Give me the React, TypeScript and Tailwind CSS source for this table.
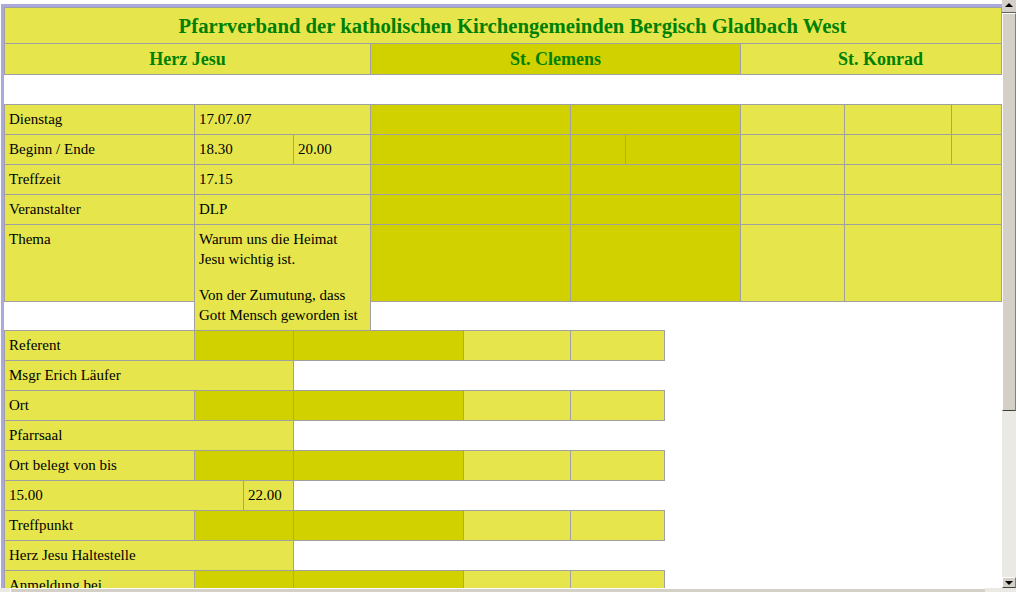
import type { ReactNode } from 'react';

type Tone = 'light' | 'dark';

function Cell({
  className = '',
  tone = 'light',
  children,
}: {
  className?: string;
  tone?: Tone;
  children?: ReactNode;
}) {
  const bg = tone === 'dark' ? 'bg-[#d1d100]' : 'bg-[#e6e64c]';
  return (
    <div
      className={`box-border shrink-0 border border-[#a0a0a0] pl-1 pt-1 leading-5 ${bg} ${className}`}
    >
      {children}
    </div>
  );
}

// one row of the lower block: label + 2 dark + 2 light cells
function FiveRow({ label }: { label: string }) {
  return (
    <div className="-mt-px flex [&>*+*]:-ml-px">
      <Cell className="h-[31px] w-[191px]">{label}</Cell>
      <Cell tone="dark" className="h-[31px] w-[100px]" />
      <Cell tone="dark" className="h-[31px] w-[171px]" />
      <Cell className="h-[31px] w-[108px]" />
      <Cell className="h-[31px] w-[95px]" />
    </div>
  );
}

function WideRow({ text }: { text: string }) {
  return (
    <div className="-mt-px flex">
      <Cell className="h-[31px] w-[290px]">{text}</Cell>
    </div>
  );
}

function Arrow({ up }: { up?: boolean }) {
  return up ? (
    <div className="h-0 w-0 border-x-[4px] border-b-[4px] border-x-transparent border-b-black" />
  ) : (
    <div className="h-0 w-0 border-x-[4px] border-t-[4px] border-x-transparent border-t-black" />
  );
}

function VScrollbar() {
  return (
    <div className="flex w-[14px] flex-col bg-[#ebe9e4]">
      <div className="flex h-[13px] items-start justify-center border-b border-[#606060] bg-[#d4d0c8] pt-[3px]">
        <Arrow up />
      </div>
      <div className="h-[398px] border-b border-l border-r border-t border-b-[#404040] border-l-white border-r-[#808080] border-t-white bg-[#d4d0c8]" />
      <div className="flex-1" />
      <div className="flex h-[11px] items-center justify-center border border-b-[#404040] border-l-white border-r-[#808080] border-t-white bg-[#d4d0c8]">
        <Arrow />
      </div>
    </div>
  );
}

export default function App() {
  return (
    <div className="flex h-[592px] w-[1016px] flex-col overflow-hidden bg-white font-['Liberation_Serif','Times_New_Roman',serif] text-[15px] text-black">
      <div className="flex min-h-0 flex-1">
        <div className="w-[1002px] overflow-hidden pl-px pt-1">
          <div className="h-full border-l-[3px] border-t-[3px] border-[#a9a9dc]">
            {/* title + parish headers (table runs on under the scrollbar) */}
            <div className="flex">
              <Cell className="flex h-[37px] w-[998px] items-center justify-center !p-0 !pl-[19px] text-[20.7px] font-bold text-[#008000]">
                Pfarrverband der katholischen Kirchengemeinden Bergisch Gladbach West
              </Cell>
            </div>
            <div className="-mt-px flex text-[18px] font-bold text-[#008000] [&>*+*]:-ml-px">
              <Cell className="flex h-[32px] w-[367px] items-center justify-center !p-0">Herz Jesu</Cell>
              <Cell tone="dark" className="flex h-[32px] w-[371px] items-center justify-center !p-0">
                St. Clemens
              </Cell>
              <Cell className="flex h-[32px] w-[262px] items-center justify-center !p-0 !pl-[19px]">
                St. Konrad
              </Cell>
            </div>
            <div className="h-[29px]" />

            {/* event details */}
            <div className="flex [&>*+*]:-ml-px">
              <Cell className="h-[31px] w-[191px]">Dienstag</Cell>
              <Cell className="h-[31px] w-[177px]">17.07.07</Cell>
              <Cell tone="dark" className="h-[31px] w-[201px]" />
              <Cell tone="dark" className="h-[31px] w-[171px]" />
              <Cell className="h-[31px] w-[105px]" />
              <Cell className="h-[31px] w-[108px]" />
              <Cell className="h-[31px] w-[51px]" />
            </div>
            <div className="-mt-px flex [&>*+*]:-ml-px">
              <Cell className="h-[31px] w-[191px]">Beginn / Ende</Cell>
              <Cell className="h-[31px] w-[100px]">18.30</Cell>
              <Cell className="h-[31px] w-[78px]">20.00</Cell>
              <Cell tone="dark" className="h-[31px] w-[201px]" />
              <Cell tone="dark" className="h-[31px] w-[56px]" />
              <Cell tone="dark" className="h-[31px] w-[116px]" />
              <Cell className="h-[31px] w-[105px]" />
              <Cell className="h-[31px] w-[108px]" />
              <Cell className="h-[31px] w-[51px]" />
            </div>
            <div className="-mt-px flex [&>*+*]:-ml-px">
              <Cell className="h-[31px] w-[191px]">Treffzeit</Cell>
              <Cell className="h-[31px] w-[177px]">17.15</Cell>
              <Cell tone="dark" className="h-[31px] w-[201px]" />
              <Cell tone="dark" className="h-[31px] w-[171px]" />
              <Cell className="h-[31px] w-[105px]" />
              <Cell className="h-[31px] w-[158px]" />
            </div>
            <div className="-mt-px flex [&>*+*]:-ml-px">
              <Cell className="h-[31px] w-[191px]">Veranstalter</Cell>
              <Cell className="h-[31px] w-[177px]">DLP</Cell>
              <Cell tone="dark" className="h-[31px] w-[201px]" />
              <Cell tone="dark" className="h-[31px] w-[171px]" />
              <Cell className="h-[31px] w-[105px]" />
              <Cell className="h-[31px] w-[158px]" />
            </div>
            <div className="-mt-px flex items-start [&>*+*]:-ml-px">
              <Cell className="h-[78px] w-[191px]">Thema</Cell>
              <Cell className="h-[107px] w-[177px] pr-[6px]">
                <p>Warum uns die Heimat Jesu wichtig ist.</p>
                <p className="mt-4">Von der Zumutung, dass Gott Mensch geworden ist</p>
              </Cell>
              <Cell tone="dark" className="h-[78px] w-[201px]" />
              <Cell tone="dark" className="h-[78px] w-[171px]" />
              <Cell className="h-[78px] w-[105px]" />
              <Cell className="h-[78px] w-[158px]" />
            </div>

            {/* organisation */}
            <FiveRow label="Referent" />
            <WideRow text="Msgr Erich Läufer" />
            <FiveRow label="Ort" />
            <WideRow text="Pfarrsaal" />
            <FiveRow label="Ort belegt von bis" />
            <div className="-mt-px flex [&>*+*]:-ml-px">
              <Cell className="h-[31px] w-[240px]">15.00</Cell>
              <Cell className="h-[31px] w-[51px]">22.00</Cell>
            </div>
            <FiveRow label="Treffpunkt" />
            <WideRow text="Herz Jesu Haltestelle" />
            <FiveRow label="Anmeldung bei" />
          </div>
        </div>
        <VScrollbar />
      </div>
      <div className="flex h-[4px] bg-[#ebe9e4]">
        <div className="ml-[10px] w-[975px] border-l border-t border-l-white border-t-white bg-[#d4d0c8]" />
      </div>
    </div>
  );
}
